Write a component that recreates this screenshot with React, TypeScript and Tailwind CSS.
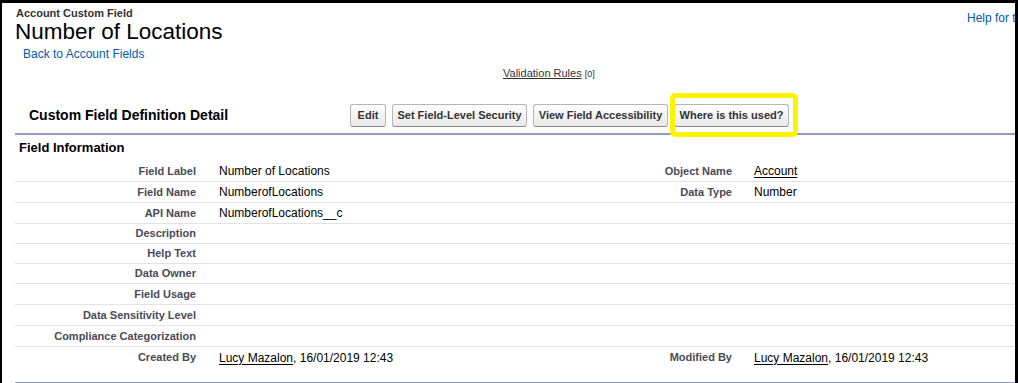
import React from "react";

type Row = {
  label: string;
  value?: React.ReactNode;
  label2?: string;
  value2?: React.ReactNode;
  h: string;
};

const Link = ({ children }: { children: React.ReactNode }) => (
  <span className="underline underline-offset-2 text-black">{children}</span>
);

const rows: Row[] = [
  { label: "Field Label", value: "Number of Locations", label2: "Object Name", value2: <Link>Account</Link>, h: "h-[21px]" },
  { label: "Field Name", value: "NumberofLocations", label2: "Data Type", value2: "Number", h: "h-[21px]" },
  { label: "API Name", value: "NumberofLocations__c", h: "h-[21px]" },
  { label: "Description", h: "h-[20px]" },
  { label: "Help Text", h: "h-[20px]" },
  { label: "Data Owner", h: "h-[20px]" },
  { label: "Field Usage", h: "h-[21px]" },
  { label: "Data Sensitivity Level", h: "h-[21px]" },
  { label: "Compliance Categorization", h: "h-[21px]" },
  {
    label: "Created By",
    value: (
      <>
        <Link>Lucy Mazalon</Link>, 16/01/2019 12:43
      </>
    ),
    label2: "Modified By",
    value2: (
      <>
        <Link>Lucy Mazalon</Link>, 16/01/2019 12:43
      </>
    ),
    h: "h-[21px]",
  },
];

const Button = ({ label, width }: { label: string; width: string }) => (
  <button
    className={`${width} h-[23px] rounded-[3px] border border-[#b5b5b5] border-b-[#8a8a8a] bg-linear-to-b from-white to-[#e9e9e9] text-[11px] font-bold text-[#333] leading-none`}
  >
    {label}
  </button>
);

export default function App() {
  return (
    <div className="relative w-[1018px] h-[383px] overflow-hidden bg-white border-t-[3px] border-l-2 border-r-[3px] border-black font-['Liberation_Sans',Arial,sans-serif] text-black">
      {/* Page header */}
      <div className="flex">
        <div className="flex-1 pl-[13px] pt-[4px]">
          <div className="pl-[1px] text-[11px] leading-[13px] font-bold text-[#333]">Account Custom Field</div>
          <h1 className="text-[22.5px] leading-[24px] text-black">Number of Locations</h1>
          <div className="pl-[8px] mt-[3px] text-[12px] leading-[14px] text-[#015ba7]">Back to Account Fields</div>
        </div>
        <div className="w-[48px] pt-[8px] whitespace-nowrap text-[12px] leading-[14px] text-[#015ba7]">Help for this Page</div>
      </div>

      {/* Related list links */}
      <div className="mt-[5px] pl-[501px] text-[11px] leading-[14px] text-[#333]">
        <span className="underline">Validation Rules</span> <span className="text-[9px]">[0]</span>
      </div>

      {/* Detail block */}
      <div className="ml-[13px]">
        <div className="mt-[23px] flex items-center h-[23px]">
          <div className="w-[335px] pl-[14px] text-[14px] font-bold">Custom Field Definition Detail</div>
          <div className="flex items-center gap-[6px]">
            <Button label="Edit" width="w-[36px]" />
            <Button label="Set Field-Level Security" width="w-[135px]" />
            <Button label="View Field Accessibility" width="w-[135px]" />
            <div className="relative flex">
              <Button label="Where is this used?" width="w-[115px]" />
              <span className="absolute -left-[4px] -top-[11px] w-[128px] h-[44px] rounded-[5px] border-[5px] border-[#fff300] z-10 pointer-events-none" />
            </div>
          </div>
        </div>
        <div className="mt-[6px] border-b-2 border-[#8e9cc0]" />

        <div className="pt-[5px] pl-[4px] text-[13px] leading-[15px] font-bold">Field Information</div>

        <div className="mt-[6px]">
          {rows.map((r, i) => (
            <div
              key={r.label}
              className={`flex items-center ${r.h} ${i < rows.length - 1 ? "border-b border-[#e3e3e3]" : ""}`}
            >
              <div className="w-[181px] text-right text-[11px] font-bold text-[#4a4a56]">{r.label}</div>
              <div className="w-[323px] pl-[23px] text-[12px]">{r.value}</div>
              <div className="w-[213px] text-right text-[11px] font-bold text-[#4a4a56]">{r.label2}</div>
              <div className="flex-1 pl-[22px] text-[12px]">{r.value2}</div>
            </div>
          ))}
        </div>
        <div className="mt-[14px] border-b-2 border-[#8e9cc0]" />
      </div>
    </div>
  );
}
